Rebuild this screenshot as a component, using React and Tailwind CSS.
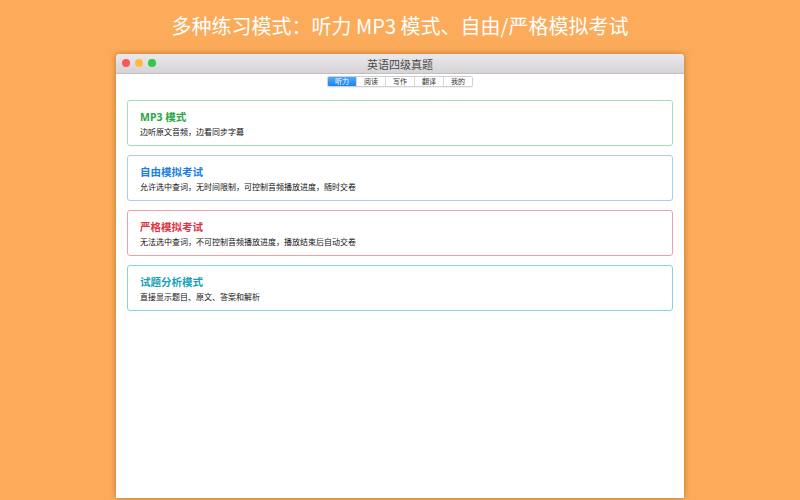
import React from "react";

const cards = [
  { title: "MP3 模式", desc: "边听原文音频，边看同步字幕", border: "border-[#a8dcb6]", color: "text-[#28a745]" },
  { title: "自由模拟考试", desc: "允许选中查词，无时间限制，可控制音频播放进度，随时交卷", border: "border-[#a9cdf3]", color: "text-[#1a7fe6]" },
  { title: "严格模拟考试", desc: "无法选中查词，不可控制音频播放进度，播放结束后自动交卷", border: "border-[#ee9fa8]", color: "text-[#dc3545]" },
  { title: "试题分析模式", desc: "直接显示题目、原文、答案和解析", border: "border-[#8fd0dc]", color: "text-[#17a2b8]" },
];

const tabs = ["听力", "阅读", "写作", "翻译", "我的"];

export default function App() {
  return (
    <div className="w-[800px] h-[500px] bg-[#fbab5a] overflow-hidden flex flex-col items-center" style={{ fontFamily: '"Noto Sans CJK SC", "Noto Sans", sans-serif' }}>
      <div className="h-[54px] flex items-center justify-center text-white text-[20px] font-normal leading-none pb-[2px]" style={{ fontFamily: '"Noto Sans CJK SC", "DejaVu Sans Mono", monospace' }}>
        多种练习模式：听力 MP3 模式、自由/严格模拟考试
      </div>
      <div className="w-[568px] h-[444px] bg-white rounded-t-[4px] shadow-[0_0_6px_rgba(120,60,0,0.45)] flex flex-col overflow-hidden">
        <div className="h-[20px] bg-gradient-to-b from-[#ebe9eb] to-[#d5d3d5] border-b border-[#c2c0c2] relative flex items-center justify-center">
          <div className="absolute left-[6px] top-[5px] flex gap-[5px]">
            <div className="w-[8px] h-[8px] rounded-full bg-[#fc5753]" />
            <div className="w-[8px] h-[8px] rounded-full bg-[#fdbc40]" />
            <div className="w-[8px] h-[8px] rounded-full bg-[#33c748]" />
          </div>
          <span className="text-[11px] text-[#4a4a4a] leading-none mt-[2px]">英语四级真题</span>
        </div>
        <div className="flex justify-center pt-[2px]">
          <div className="flex h-[11px] border border-[#d0d0d0] rounded-[2px] shadow-[0_1px_0_rgba(0,0,0,0.05)] overflow-hidden">
            {tabs.map((t, i) => (
              <div
                key={t}
                className={
                  i === 0
                    ? "w-[28px] flex items-center justify-center text-[7px] leading-none text-white bg-gradient-to-b from-[#4ea8fb] to-[#1a82f3]"
                    : "w-[29px] flex items-center justify-center text-[7px] leading-none text-[#333] bg-white border-l border-[#d8d8d8]"
                }
              >
                {t}
              </div>
            ))}
          </div>
        </div>
        <div className="flex flex-col gap-[9px] px-[11px] pt-[13px]">
          {cards.map((c) => (
            <div key={c.title} className={`h-[46px] border ${c.border} rounded-[3px] pl-[12px] flex flex-col justify-center`}>
              <div className={`${c.color} text-[10.5px] font-bold leading-none mt-[2px]`} style={{ fontFamily: '"Noto Sans", "Noto Sans CJK SC", sans-serif' }}>{c.title}</div>
              <div className="text-[8px] text-[#111] leading-none mt-[5px]">{c.desc}</div>
            </div>
          ))}
        </div>
      </div>
    </div>
  );
}
